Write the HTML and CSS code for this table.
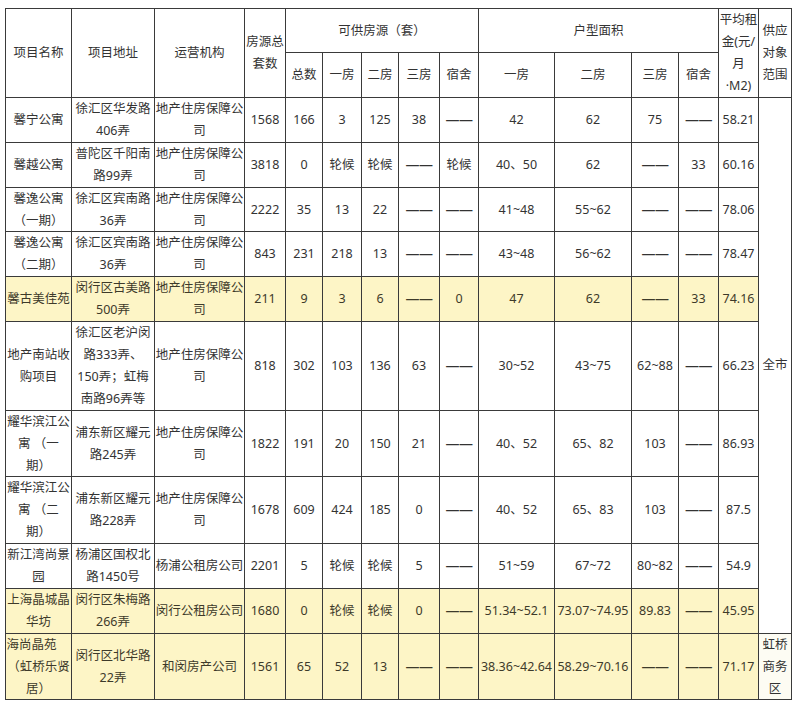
FILE: index.html
```html
<!DOCTYPE html>
<html lang="zh-CN">
<head>
<meta charset="utf-8">
<title>保障性租赁住房房源表</title>
<link rel="stylesheet" href="styles.css">
</head>
<body>
<table class="grid">
  <colgroup>
    <col class="c-name"><col class="c-addr"><col class="c-org"><col class="c-total">
    <col class="c-n1"><col class="c-n2"><col class="c-n3"><col class="c-n4"><col class="c-n5">
    <col class="c-a1"><col class="c-a2"><col class="c-a3"><col class="c-a4">
    <col class="c-rent"><col class="c-scope">
  </colgroup>
  <thead>
    <tr class="top">
      <th rowspan="2">项目名称</th>
      <th rowspan="2">项目地址</th>
      <th rowspan="2">运营机构</th>
      <th rowspan="2">房源总<br>套数</th>
      <th colspan="5">可供房源（套）</th>
      <th colspan="4">户型面积</th>
      <th rowspan="2">平均租<br>金(元/<br>月<br>·M2)</th>
      <th rowspan="2">供应<br>对象<br>范围</th>
    </tr>
    <tr class="sub">
      <th>总数</th><th>一房</th><th>二房</th><th>三房</th><th>宿舍</th>
      <th>一房</th><th>二房</th><th>三房</th><th>宿舍</th>
    </tr>
  </thead>
  <tbody>
    <tr>
      <td>馨宁公寓</td><td>徐汇区华发路<br>406弄</td><td>地产住房保障公<br>司</td>
      <td>1568</td><td>166</td><td>3</td><td>125</td><td>38</td><td class="dash">——</td>
      <td>42</td><td>62</td><td>75</td><td class="dash">——</td><td>58.21</td>
      <td rowspan="10">全市</td>
    </tr>
    <tr>
      <td>馨越公寓</td><td>普陀区千阳南<br>路99弄</td><td>地产住房保障公<br>司</td>
      <td>3818</td><td>0</td><td>轮候</td><td>轮候</td><td class="dash">——</td><td>轮候</td>
      <td>40、50</td><td>62</td><td class="dash">——</td><td>33</td><td>60.16</td>
    </tr>
    <tr>
      <td>馨逸公寓<br>（一期）</td><td>徐汇区宾南路<br>36弄</td><td>地产住房保障公<br>司</td>
      <td>2222</td><td>35</td><td>13</td><td>22</td><td class="dash">——</td><td class="dash">——</td>
      <td>41~48</td><td>55~62</td><td class="dash">——</td><td class="dash">——</td><td>78.06</td>
    </tr>
    <tr>
      <td>馨逸公寓<br>（二期）</td><td>徐汇区宾南路<br>36弄</td><td>地产住房保障公<br>司</td>
      <td>843</td><td>231</td><td>218</td><td>13</td><td class="dash">——</td><td class="dash">——</td>
      <td>43~48</td><td>56~62</td><td class="dash">——</td><td class="dash">——</td><td>78.47</td>
    </tr>
    <tr class="hl">
      <td>馨古美佳苑</td><td>闵行区古美路<br>500弄</td><td>地产住房保障公<br>司</td>
      <td>211</td><td>9</td><td>3</td><td>6</td><td class="dash">——</td><td>0</td>
      <td>47</td><td>62</td><td class="dash">——</td><td>33</td><td>74.16</td>
    </tr>
    <tr>
      <td>地产南站收<br>购项目</td><td>徐汇区老沪闵<br>路333弄、<br>150弄；虹梅<br>南路96弄等</td><td>地产住房保障公<br>司</td>
      <td>818</td><td>302</td><td>103</td><td>136</td><td>63</td><td class="dash">——</td>
      <td>30~52</td><td>43~75</td><td>62~88</td><td class="dash">——</td><td>66.23</td>
    </tr>
    <tr>
      <td>耀华滨江公<br>寓 （一<br>期）</td><td>浦东新区耀元<br>路245弄</td><td>地产住房保障公<br>司</td>
      <td>1822</td><td>191</td><td>20</td><td>150</td><td>21</td><td class="dash">——</td>
      <td>40、52</td><td>65、82</td><td>103</td><td class="dash">——</td><td>86.93</td>
    </tr>
    <tr>
      <td>耀华滨江公<br>寓 （二<br>期）</td><td>浦东新区耀元<br>路228弄</td><td>地产住房保障公<br>司</td>
      <td>1678</td><td>609</td><td>424</td><td>185</td><td>0</td><td class="dash">——</td>
      <td>40、52</td><td>65、83</td><td>103</td><td class="dash">——</td><td>87.5</td>
    </tr>
    <tr>
      <td>新江湾尚景<br>园</td><td>杨浦区国权北<br>路1450号</td><td>杨浦公租房公司</td>
      <td>2201</td><td>5</td><td>轮候</td><td>轮候</td><td>5</td><td class="dash">——</td>
      <td>51~59</td><td>67~72</td><td>80~82</td><td class="dash">——</td><td>54.9</td>
    </tr>
    <tr class="hl">
      <td>上海晶城晶<br>华坊</td><td>闵行区朱梅路<br>266弄</td><td>闵行公租房公司</td>
      <td>1680</td><td>0</td><td>轮候</td><td>轮候</td><td>0</td><td class="dash">——</td>
      <td>51.34~52.1</td><td>73.07~74.95</td><td>89.83</td><td class="dash">——</td><td>45.95</td>
    </tr>
    <tr class="hl">
      <td><span class="pad-r">海尚晶苑</span><br>（虹桥乐贤<br>居）</td><td>闵行区北华路<br>22弄</td><td>和闵房产公司</td>
      <td>1561</td><td>65</td><td>52</td><td>13</td><td class="dash">——</td><td class="dash">——</td>
      <td>38.36~42.64</td><td>58.29~70.16</td><td class="dash">——</td><td class="dash">——</td><td>71.17</td>
      <td class="scope">虹桥<br>商务<br>区</td>
    </tr>
  </tbody>
</table>
</body>
</html>
```

FILE: styles.css
```css
html, body {
  margin: 0;
  padding: 0;
  background: #ffffff;
}

.grid {
  margin: 8px 0 0 5px;
  width: 787px;
  table-layout: fixed;
  border-collapse: collapse;
  font-family: "Noto Sans", "Noto Sans CJK SC", sans-serif;
  font-size: 12.5px;
  line-height: 21.9px;
  color: #333333;
}

.grid th,
.grid td {
  border: 1px solid #3a3a3a;
  padding: 0;
  text-align: center;
  vertical-align: middle;
  white-space: nowrap;
  font-weight: normal;
  overflow: visible;
}

.grid tr.top {
  height: 44px;
}

.grid tr.sub {
  height: 45px;
}

.c-name { width: 66px; }
.c-addr { width: 83px; }
.c-org { width: 90px; }
.c-total { width: 41px; }
.c-n1 { width: 37px; }
.c-n2 { width: 39px; }
.c-n3 { width: 37px; }
.c-n4 { width: 41px; }
.c-n5 { width: 39px; }
.c-a1 { width: 76px; }
.c-a2 { width: 77px; }
.c-a3 { width: 47px; }
.c-a4 { width: 40px; }
.c-rent { width: 40px; }
.c-scope { width: 33px; }

.grid .dash {
  font-size: 14px;
  letter-spacing: -0.5px;
}

.grid tr.hl td {
  background: #fdf5c6;
  color: #3d3a2a;
}

.grid tr.hl td.scope {
  background: #fdfcf3;
  color: #333333;
}

.pad-r {
  padding-right: 14px;
}
```
